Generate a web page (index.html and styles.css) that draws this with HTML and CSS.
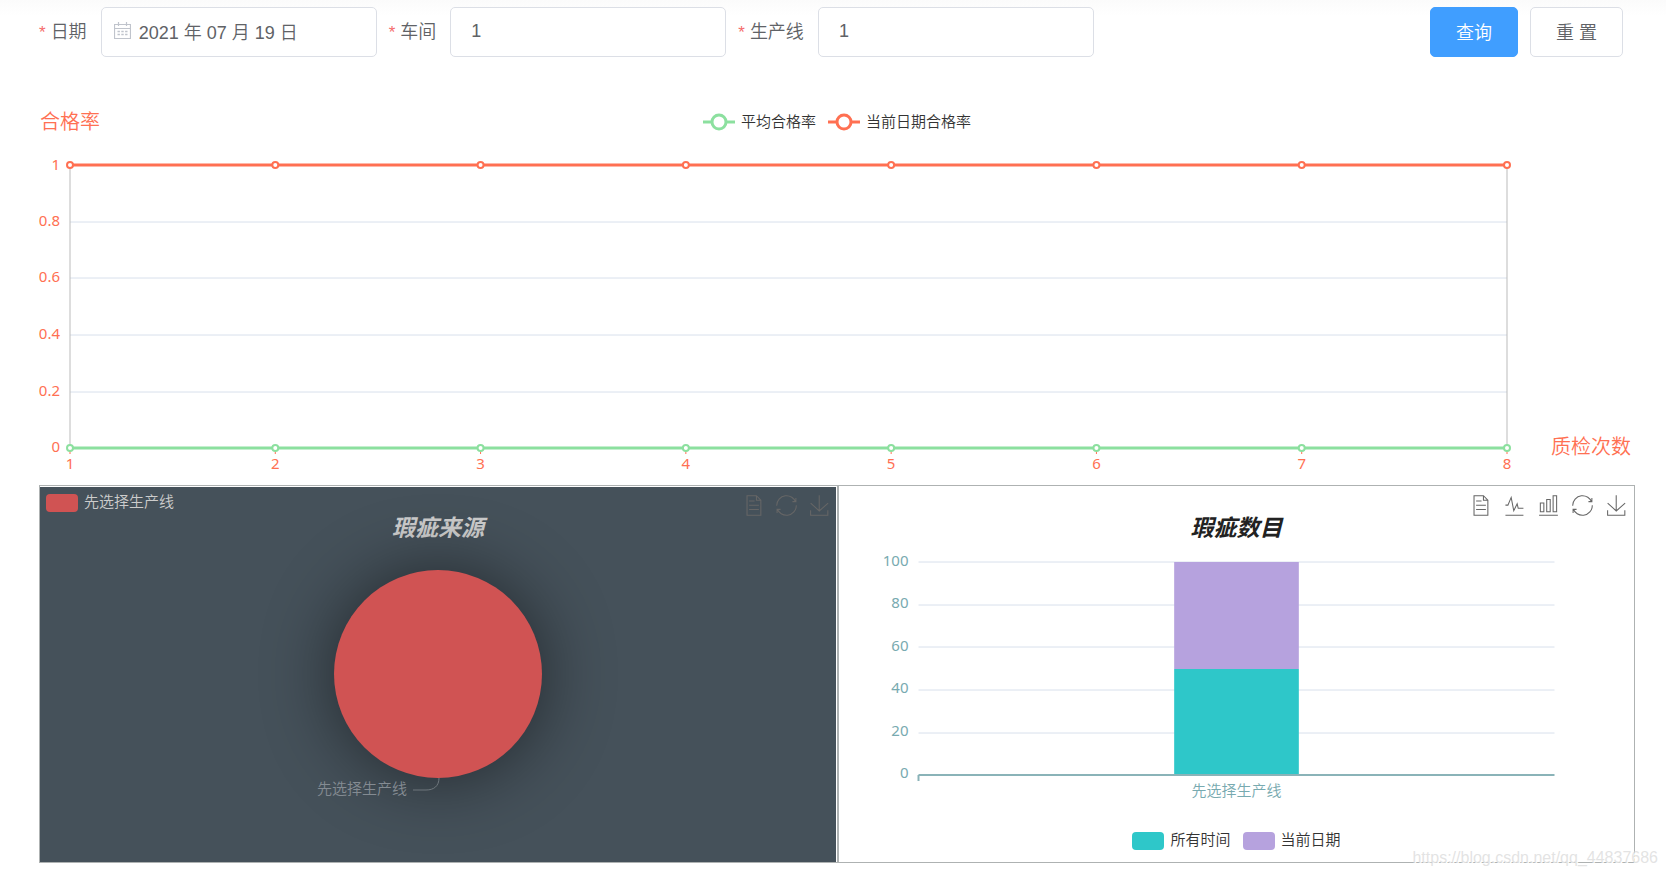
FILE: index.html
```html
<!DOCTYPE html>
<html lang="zh-CN">
<head>
<meta charset="utf-8">
<meta name="viewport" content="width=device-width, initial-scale=1">
<title>质检统计</title>
<link rel="stylesheet" href="styles.css">
</head>
<body>
<svg class="defs" aria-hidden="true">
  <symbol id="i-data" viewBox="0 0 60 60"><path d="M17.5,17.3H33 M45.4,29.5h-28 M11.5,2v56H51V14.8L38.4,2H11.5z M38.4,2.2v12.7H51 M45.4,41.7h-28"/></symbol>
  <symbol id="i-line" viewBox="0 0 60 60"><path d="M4.1,28.9h7.1l9.3-22l7.4,38l9.7-19.7l3,12.8h14.9M4.1,58h51.4"/></symbol>
  <symbol id="i-bar" viewBox="0 0 60 60"><path d="M6.7,22.9h10V48h-10V22.9z M24.9,13h10v35h-10V13z M43.2,2h10v46h-10V2z M3.1,58h53.7"/></symbol>
  <symbol id="i-restore" viewBox="0 0 60 60"><path d="M47,18.9h9.8V8.7 M56.3,20.1C52.1,9,40.5,0.6,26.8,2.1C12.6,3.7,1.6,16.2,2.1,30.6 M13,41.1H3.1v10.2 M3.7,39.9c4.2,11.1,15.8,19.5,29.5,18c14.2-1.6,25.2-14.1,24.7-28.5"/></symbol>
  <symbol id="i-save" viewBox="0 0 60 60"><path d="M4.7,22.9L29.3,45.5L54.7,23.4M4.6,43.6L4.6,58L53.8,58L53.8,43.6M29.2,45.1L29.2,1"/></symbol>
</svg>

<form class="toolbar" onsubmit="return false">
  <div class="field">
    <label for="date">日期</label>
    <div class="box">
      <svg class="calendar" viewBox="0 0 17 17" aria-hidden="true"><path d="M.5 2.5h16v14H.5zM.5 6.5h16M4.5 0v4M12.5 0v4" fill="none" stroke="currentColor" stroke-width="1.2"/><path d="M3.5 9.5h10M3.5 12.5h10" fill="none" stroke="currentColor" stroke-width="1.4" stroke-dasharray="2.4 1.4"/></svg>
      <input id="date" class="with-icon" type="text" value="2021 年 07 月 19 日">
    </div>
  </div>
  <div class="field">
    <label for="shop">车间</label>
    <div class="box"><input id="shop" type="text" value="1"></div>
  </div>
  <div class="field">
    <label for="line">生产线</label>
    <div class="box"><input id="line" type="text" value="1"></div>
  </div>
  <div class="actions">
    <button class="btn primary" type="submit">查询</button>
    <button class="btn" type="reset">重 置</button>
  </div>
</form>

<main>
  <section class="rate">
    <header class="rate-head">
      <h2>合格率</h2>
      <div class="legend">
        <span class="key"><svg class="mark green" viewBox="0 0 32 18"><path d="M0 9h32"/><circle cx="16" cy="9" r="7"/></svg><span>平均合格率</span></span>
        <span class="key"><svg class="mark orange" viewBox="0 0 32 18"><path d="M0 9h32"/><circle cx="16" cy="9" r="7"/></svg><span>当前日期合格率</span></span>
      </div>
    </header>
    <svg class="rate-chart">
      <svg class="rate-plot" x="31" y="29">
        <g class="grid"><line x2="100%" y1="57" y2="57"/><line x2="100%" y1="113" y2="113"/><line x2="100%" y1="170" y2="170"/><line x2="100%" y1="227" y2="227"/></g>
        <g class="frame"><line y2="283"/><line x1="100%" x2="100%" y2="283"/></g>
        <g class="ylab"><text x="-10" y="5">1</text><text x="-10" y="61">0.8</text><text x="-10" y="117">0.6</text><text x="-10" y="174">0.4</text><text x="-10" y="231">0.2</text><text x="-10" y="287">0</text></g>
        <g class="tick"><line y1="283" y2="289"/><line x1="14.286%" x2="14.286%" y1="283" y2="289"/><line x1="28.571%" x2="28.571%" y1="283" y2="289"/><line x1="42.857%" x2="42.857%" y1="283" y2="289"/><line x1="57.143%" x2="57.143%" y1="283" y2="289"/><line x1="71.429%" x2="71.429%" y1="283" y2="289"/><line x1="85.714%" x2="85.714%" y1="283" y2="289"/><line x1="100%" x2="100%" y1="283" y2="289"/></g>
        <g class="xlab"><text x="0" y="304">1</text><text x="14.286%" y="304">2</text><text x="28.571%" y="304">3</text><text x="42.857%" y="304">4</text><text x="57.143%" y="304">5</text><text x="71.429%" y="304">6</text><text x="85.714%" y="304">7</text><text x="100%" y="304">8</text></g>
        <text class="axis-name" x="100%" dx="44" y="289">质检次数</text>
        <g class="series green"><line x2="100%" y1="283" y2="283"/><circle cx="0" cy="283" r="3"/><circle cx="14.286%" cy="283" r="3"/><circle cx="28.571%" cy="283" r="3"/><circle cx="42.857%" cy="283" r="3"/><circle cx="57.143%" cy="283" r="3"/><circle cx="71.429%" cy="283" r="3"/><circle cx="85.714%" cy="283" r="3"/><circle cx="100%" cy="283" r="3"/></g>
        <g class="series orange"><line x2="100%"/><circle cx="0" r="3"/><circle cx="14.286%" r="3"/><circle cx="28.571%" r="3"/><circle cx="42.857%" r="3"/><circle cx="57.143%" r="3"/><circle cx="71.429%" r="3"/><circle cx="85.714%" r="3"/><circle cx="100%" r="3"/></g>
      </svg>
    </svg>
  </section>

  <div class="panels">
    <section class="panel dark">
      <div class="panel-body">
        <header class="panel-head">
          <span class="key"><i class="swatch red"></i><span>先选择生产线</span></span>
          <div class="tools">
            <button aria-label="数据视图"><svg><use href="#i-data"/></svg></button>
            <button aria-label="还原"><svg><use href="#i-restore"/></svg></button>
            <button aria-label="保存为图片"><svg><use href="#i-save"/></svg></button>
          </div>
        </header>
        <h2>瑕疵来源</h2>
        <svg class="pie">
          <defs><filter id="soft" x="-100%" y="-100%" width="300%" height="300%"><feGaussianBlur stdDeviation="36"/></filter></defs>
          <circle class="shade" cx="50%" cy="136" r="104" filter="url(#soft)"/>
          <circle class="disc" cx="50%" cy="136" r="104"/>
          <svg x="50%" class="free"><path class="leader" d="M1 240C1 248-4 252-12 252H-25"/><text class="pie-label" x="-31" y="256">先选择生产线</text></svg>
        </svg>
      </div>
    </section>

    <section class="panel">
      <header class="panel-head">
        <div class="tools">
          <button aria-label="数据视图"><svg><use href="#i-data"/></svg></button>
          <button aria-label="切换为折线图"><svg><use href="#i-line"/></svg></button>
          <button aria-label="切换为柱状图"><svg><use href="#i-bar"/></svg></button>
          <button aria-label="还原"><svg><use href="#i-restore"/></svg></button>
          <button aria-label="保存为图片"><svg><use href="#i-save"/></svg></button>
        </div>
      </header>
      <h2>瑕疵数目</h2>
      <svg class="bars">
        <svg class="free" x="10%" y="24" width="80%">
          <g class="grid"><line x2="100%"/><line x2="100%" y1="43" y2="43"/><line x2="100%" y1="85" y2="85"/><line x2="100%" y1="128" y2="128"/><line x2="100%" y1="171" y2="171"/></g>
          <rect class="now" x="40.2%" width="19.6%" height="107"/>
          <rect class="all" x="40.2%" y="107" width="19.6%" height="106"/>
          <g class="base"><line x2="100%" y1="213" y2="213"/><line y1="213" y2="219"/></g>
          <g class="ylab teal"><text x="-10" y="4">100</text><text x="-10" y="46">80</text><text x="-10" y="89">60</text><text x="-10" y="131">40</text><text x="-10" y="174">20</text><text x="-10" y="216">0</text></g>
          <text class="cat" x="50%" y="234">先选择生产线</text>
        </svg>
      </svg>
      <div class="legend bottom">
        <span class="key"><i class="swatch cyan"></i><span>所有时间</span></span>
        <span class="key"><i class="swatch purple"></i><span>当前日期</span></span>
      </div>
    </section>
  </div>
</main>
<div class="watermark">https://blog.csdn.net/qq_44837686</div>
</body>
</html>
```
FILE: styles.css
```css
* { box-sizing: border-box; }

body {
  margin: 0;
  padding: 7px 31px 0 39px;
  background: #fff linear-gradient(#fbfbfb, #fff) no-repeat top / 100% 16px;
  color: #333;
  font-family: "Noto Sans", "Noto Sans CJK SC", sans-serif;
  font-size: 15px;
  font-weight: 350;
}

h2 { margin: 0; }
.defs { position: absolute; width: 0; height: 0; }

/* query bar */
.toolbar {
  display: flex;
  align-items: center;
  gap: 12px;
  height: 50px;
  padding-right: 12px;
  color: #606266;
  font-family: "Liberation Sans", "Noto Sans CJK SC", sans-serif;
}
.field { display: flex; align-items: center; min-width: 0; }
.field label {
  padding-right: 14px;
  font-size: 18px;
  line-height: 48px;
  white-space: nowrap;
}
.field label::before { content: "*"; margin-right: 5px; color: #f56c6c; font-size: 17px; }
.box { position: relative; min-width: 0; }
.box input {
  display: block;
  width: 276px;
  max-width: 100%;
  height: 50px;
  padding: 0 20px 1px;
  border: 1px solid #dcdfe6;
  border-radius: 5px;
  background: #fff;
  color: #606266;
  font: inherit;
  font-size: 18px;
}
.box .with-icon { padding: 0 20px 3px 37px; }
.calendar { position: absolute; left: 13px; top: 15px; width: 17px; height: 17px; color: #c0c4cc; }
.actions { display: flex; gap: 12px; margin-left: auto; }
.btn {
  height: 50px;
  padding: 0 25px 3px;
  border: 1px solid #dcdfe6;
  border-radius: 5px;
  background: #fff;
  color: #606266;
  font: inherit;
  font-size: 18px;
  white-space: nowrap;
}
.btn.primary { border-color: #409eff; background: #409eff; color: #fff; }

/* legends */
.legend { display: flex; justify-content: center; gap: 12px; }
.key { display: flex; align-items: center; gap: 6px; line-height: 18px; white-space: nowrap; }
.key span { padding-bottom: 3px; }
.mark { width: 32px; height: 18px; fill: #fff; stroke-width: 3px; }
.swatch { width: 32px; height: 18px; border-radius: 4px; }
.red { background: #d05353; }
.cyan { background: #2ec7c9; }
.purple { background: #b6a2de; }
.green { stroke: #8ce09f; }
.orange { stroke: #ff7052; }

/* pass-rate line chart */
.rate-head {
  display: grid;
  grid-template-columns: 1fr auto 1fr;
  align-items: center;
  margin-top: 51px;
}
.rate-head h2 { padding-left: 1px; color: #ff7052; font-size: 20px; font-weight: 350; line-height: 28px; }
.rate-chart { display: block; width: 100%; height: 349px; }
.rate-plot { width: calc(100% - 159px); overflow: visible; }
.grid { stroke: #d8e0ec; }
.frame { stroke: #bbb; }
.ylab { fill: #ff7052; font-weight: 400; text-anchor: end; }
.xlab { fill: #ff7052; font-weight: 400; text-anchor: middle; }
.tick { stroke: #ff7052; }
.axis-name { fill: #ff7052; font-size: 20px; }
.series { fill: #fff; stroke-width: 3px; }
.series circle { stroke-width: 2px; }

/* lower panels */
.panels { display: grid; grid-template-columns: 799fr 797fr; }
.panel { min-width: 0; border: 1px solid #aeb2b2; background: #fff; }
.panel.dark { padding: 1px 1px 0 0; }
.panel-body { overflow: hidden; background: #45515a; color: #ccc; }
.panel-head {
  display: flex;
  justify-content: space-between;
  align-items: flex-start;
  height: 30px;
  padding: 5px 7px 0 6px;
}
.dark .panel-head { height: 29px; padding-right: 6px; }
.panel h2 {
  color: #222;
  font-size: 23px;
  font-style: italic;
  line-height: 22px;
  text-align: center;
}
.panel.dark h2 { color: #ccc; }
.tools { display: flex; gap: 13px; margin-left: auto; padding-top: 4px; }
.dark .tools { gap: 12px; padding-top: 3px; }
.tools button { display: block; padding: 0; border: 0; background: none; }
.tools svg { display: block; width: 21px; height: 21px; fill: none; stroke: #666; stroke-width: 3px; }

.pie { display: block; width: 100%; height: 324px; overflow: visible; }
.free { overflow: visible; }
.shade { fill: #000; opacity: 0.5; }
.disc { fill: #d05353; }
.leader { fill: none; stroke: #6f777d; stroke-width: 1px; }
.pie-label { fill: #848b92; text-anchor: end; }

.bars { display: block; width: 100%; height: 292px; }
.now { fill: #b6a2de; }
.all { fill: #2ec7c9; }
.base { stroke: #8ab3b8; stroke-width: 2px; }
.teal, .cat { fill: #78aab0; }
.cat { text-anchor: middle; }
.bottom { height: 32px; }
.bottom .key { height: 21px; }

.watermark {
  position: absolute;
  right: 8px;
  bottom: 7px;
  color: rgba(220, 220, 220, 0.8);
  font: 16px/20px "Liberation Sans", sans-serif;
  text-shadow: 1px 1px #fff;
}
```
